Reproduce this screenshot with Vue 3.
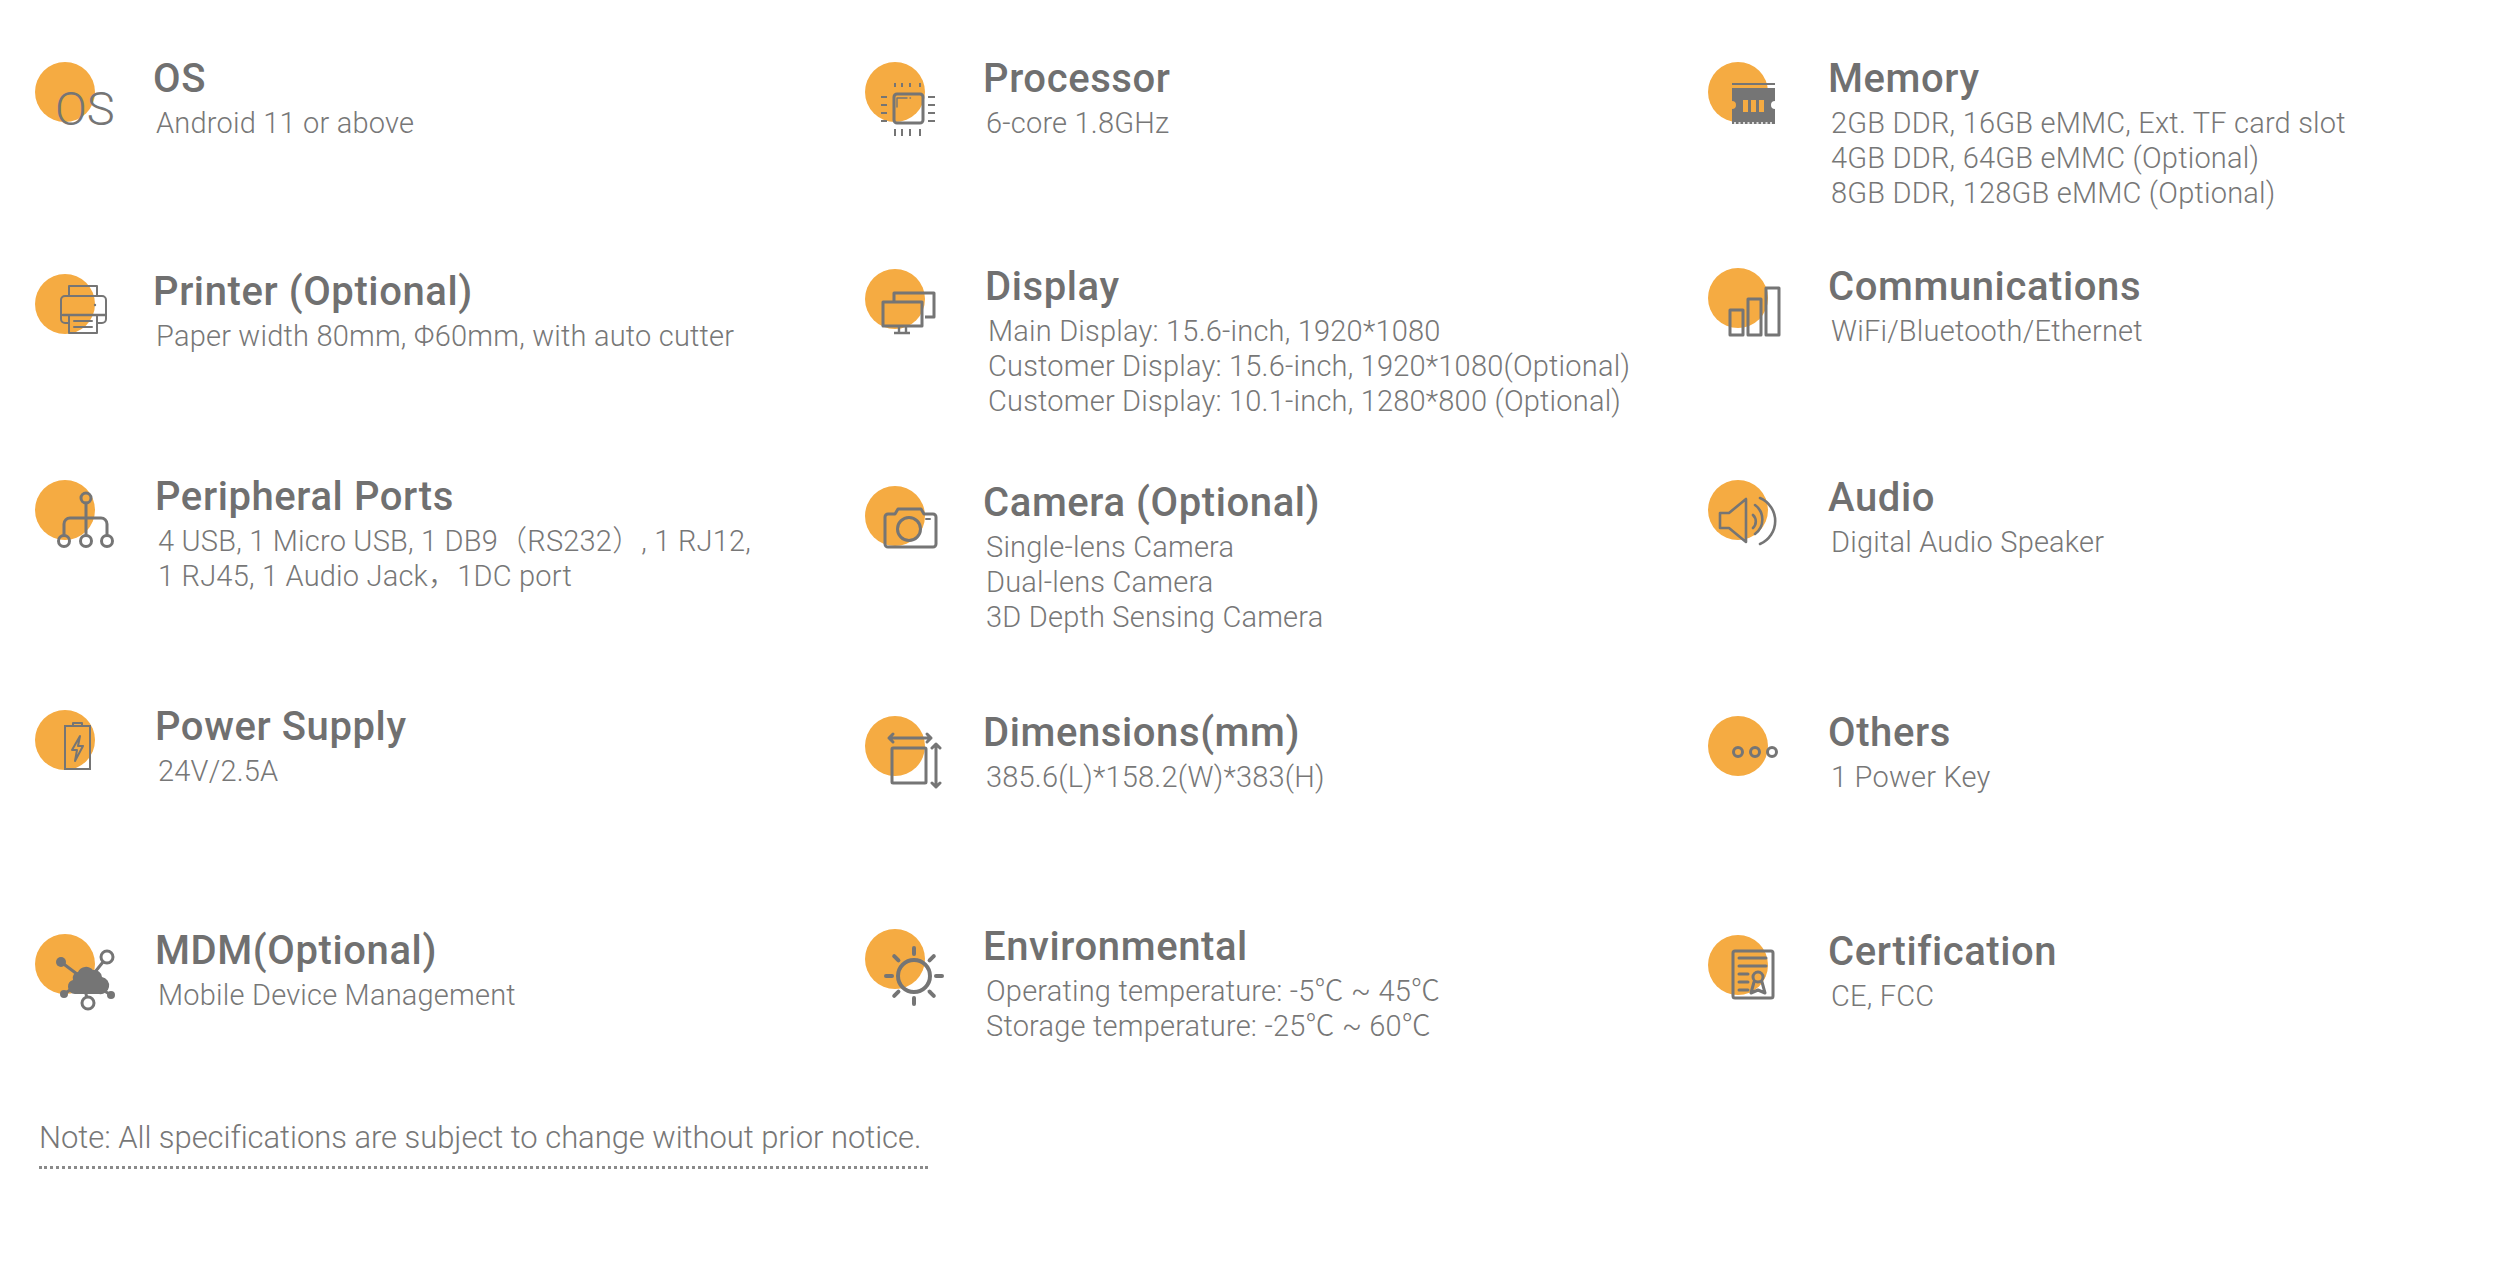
<script setup>
const specs = [
  { icon: 'os', nudge: 0, shift: 0, drop: 0, title: 'OS', lines: ['Android 11 or above'] },
  { icon: 'cpu', nudge: 0, shift: 0, drop: 0, title: 'Processor', lines: ['6-core 1.8GHz'] },
  { icon: 'memory', nudge: 0, shift: 2, drop: 0, title: 'Memory', lines: ['2GB DDR, 16GB eMMC, Ext. TF card slot', '4GB DDR, 64GB eMMC (Optional)', '8GB DDR, 128GB eMMC (Optional)'] },
  { icon: 'printer', nudge: 6, shift: 0, drop: 1, title: 'Printer (Optional)', lines: ['Paper width 80mm, Φ60mm, with auto cutter'] },
  { icon: 'display', nudge: 1, shift: 2, drop: 1, title: 'Display', lines: ['Main Display: 15.6-inch, 1920*1080', 'Customer Display: 15.6-inch, 1920*1080(Optional)', 'Customer Display: 10.1-inch, 1280*800 (Optional)'] },
  { icon: 'signal', nudge: 0, shift: 2, drop: 2, title: 'Communications', lines: ['WiFi/Bluetooth/Ethernet'] },
  { icon: 'ports', nudge: 0, shift: 2, drop: 0, title: 'Peripheral Ports', lines: ['4 USB, 1 Micro USB, 1 DB9（RS232）, 1 RJ12,', '1 RJ45, 1 Audio Jack，1DC port'] },
  { icon: 'camera', nudge: 6, shift: 0, drop: 0, title: 'Camera (Optional)', lines: ['Single-lens Camera', 'Dual-lens Camera', '3D Depth Sensing Camera'] },
  { icon: 'audio', nudge: 0, shift: 2, drop: 1, title: 'Audio', lines: ['Digital Audio Speaker'] },
  { icon: 'battery', nudge: 0, shift: 2, drop: 0, title: 'Power Supply', lines: ['24V/2.5A'] },
  { icon: 'size', nudge: 6, shift: 0, drop: 0, title: 'Dimensions(mm)', lines: ['385.6(L)*158.2(W)*383(H)'] },
  { icon: 'dots', nudge: 6, shift: 2, drop: 0, title: 'Others', lines: ['1 Power Key'] },
  { icon: 'mdm', nudge: 5, shift: 2, drop: 0, title: 'MDM(Optional)', lines: ['Mobile Device Management'] },
  { icon: 'sun', nudge: 0, shift: 0, drop: 1, title: 'Environmental', lines: ['Operating temperature: -5℃ ~ 45℃', 'Storage temperature: -25℃ ~ 60℃'] },
  { icon: 'cert', nudge: 6, shift: 2, drop: 0, title: 'Certification', lines: ['CE, FCC'] },
]
const rays = [0, 45, 90, 135, 180, 225, 270, 315]
</script>

<template>
  <div class="page">
    <div class="grid">
      <div v-for="s in specs" :key="s.title" class="spec" :class="'nudge-' + s.nudge">
        <svg class="icon" viewBox="0 0 100 90" fill="none" stroke="#757575" stroke-width="3" stroke-linecap="round" stroke-linejoin="round">
          <circle cx="30" cy="30" r="30" fill="#f5ab42" stroke="none" />
          <template v-if="s.icon === 'os'">
            <text x="20" y="63" class="os-glyph">OS</text>
          </template>
          <template v-else-if="s.icon === 'cpu'">
            <rect x="29" y="32" width="29" height="29" rx="3" />
            <path d="M32 45V36H42M45 36h.5" stroke-width="1.4" />
            <path d="M30 21v4M37 21v4M45 21v4M55 21v4M30 67v7M37 67v7M45 67v7M55 67v7M16 35h6M16 43h6M16 51h6M16 59h6M63 35h7M63 43h7M63 51h7M63 59h7" stroke-width="2" stroke-linecap="butt" />
          </template>
          <template v-else-if="s.icon === 'memory'">
            <path d="M24 22h43" stroke-width="2" stroke-linecap="butt" />
            <path d="M24 26h43v13a4 4 0 0 0 0 8v15H24V47a4 4 0 0 0 0-8z" fill="#757575" stroke="none" />
            <path d="M35 38h5v12h-5zM43 38h5v12h-5zM51 38h5v12h-5z" fill="#f5ab42" stroke="none" />
            <path d="M26 61h39" stroke="#fff" stroke-width="1.5" stroke-dasharray="2 2.5" stroke-linecap="butt" />
          </template>
          <template v-else-if="s.icon === 'printer'">
            <path d="M34 22V12h28v10" stroke-width="2" stroke-linecap="butt" />
            <path d="M34 49H30a4 4 0 0 1-4-4V26a4 4 0 0 1 4-4h37a4 4 0 0 1 4 4v19a4 4 0 0 1-4 4h-5" stroke-width="2" />
            <path d="M28 41h42" stroke-width="2.5" />
            <path d="M34 41v18h28V41" stroke-width="2" stroke-linecap="butt" />
            <path d="M39 47h18M39 53h18" stroke-width="2" />
            <circle cx="60" cy="31" r="1.2" fill="#757575" stroke="none" />
          </template>
          <template v-else-if="s.icon === 'display'">
            <path d="M29 33v-9h40v24h-9" stroke-linecap="butt" />
            <rect x="18" y="33" width="39" height="24" />
            <path d="M34 57v6M41 57v6M29 64h16" stroke-width="2.4" stroke-linecap="butt" />
          </template>
          <template v-else-if="s.icon === 'signal'">
            <rect x="22" y="42" width="13" height="25" />
            <rect x="40" y="31" width="13" height="36" />
            <rect x="58" y="20" width="13" height="47" />
          </template>
          <template v-else-if="s.icon === 'ports'">
            <circle cx="51" cy="18" r="5" />
            <circle cx="29" cy="61" r="5.5" />
            <circle cx="51" cy="61" r="5.5" />
            <circle cx="72" cy="61" r="5.5" />
            <path d="M51 23v32M29 55V44a6 6 0 0 1 6-6h31a6 6 0 0 1 6 6v11" />
          </template>
          <template v-else-if="s.icon === 'battery'">
            <rect x="30" y="16" width="25" height="43" stroke-width="2" stroke-linejoin="miter" />
            <path d="M38 16v-3h9v3" stroke-width="2" />
            <path d="M45 26l-8 14h5l-2 11 8-15h-5z" stroke-width="2" />
          </template>
          <template v-else-if="s.icon === 'camera'">
            <path d="M23 28h7l3-5h23l3 5h9a3 3 0 0 1 3 3v27a3 3 0 0 1-3 3H23a3 3 0 0 1-3-3V31a3 3 0 0 1 3-3z" />
            <circle cx="44" cy="43" r="11.5" />
            <path d="M61 33h4" stroke-width="2" />
          </template>
          <template v-else-if="s.icon === 'size'">
            <path d="M24 22h42M28 18l-4 4 4 4M62 18l4 4-4 4" />
            <rect x="27" y="32" width="34" height="35" rx="1" />
            <path d="M71 28v43M67 32l4-4 4 4M67 67l4 4 4-4" />
          </template>
          <template v-else-if="s.icon === 'audio'">
            <path d="M12 33h9l17-14v43L21 48h-9z" stroke-width="2.6" />
            <path d="M45 35a9 9 0 0 1 0 13M47 25a18 18 0 0 1 0 29M52 18a25 25 0 0 1 0 46" stroke-width="2.6" />
          </template>
          <template v-else-if="s.icon === 'dots'">
            <circle cx="30" cy="36" r="4.5" />
            <circle cx="47" cy="36" r="4.5" />
            <circle cx="64" cy="36" r="4.5" />
          </template>
          <template v-else-if="s.icon === 'mdm'">
            <path d="M26 28l16 12M72 23L60 38M29 60l12-8M53 69l-4-18M76 61L58 50" />
            <path d="M40 60a7 7 0 0 1-7-7 7 7 0 0 1 5-7 6 6 0 0 1 5-8 9 9 0 0 1 15-2 8 8 0 0 1 9 7 8.5 8.5 0 0 1-3 17z" fill="#757575" stroke="none" />
            <circle cx="26" cy="28" r="5" fill="#757575" stroke="none" />
            <circle cx="29" cy="60" r="4" fill="#757575" stroke="none" />
            <circle cx="76" cy="61" r="4" fill="#757575" stroke="none" />
            <circle cx="72" cy="23" r="6" fill="#fff" />
            <circle cx="53" cy="69" r="6" fill="#fff" />
          </template>
          <template v-else-if="s.icon === 'sun'">
            <circle cx="49" cy="47" r="16" stroke-width="4" />
            <path v-for="a in rays" :key="a" d="M49 25v-6" stroke-width="4" :transform="'rotate(' + a + ' 49 47)'" />
          </template>
          <template v-else-if="s.icon === 'cert'">
            <rect x="25" y="16" width="40" height="47" rx="2" />
            <path d="M31 23h27M31 31h27M31 39h9M31 47h9M31 55h9" />
            <circle cx="50" cy="42" r="5" />
            <path d="M46 47l-3 11 7-3 7 3-3-11" />
          </template>
        </svg>
        <div class="copy" :class="['shift-' + s.shift, 'drop-' + s.drop]">
          <h3 class="title">{{ s.title }}</h3>
          <p v-for="line in s.lines" :key="line" class="line">{{ line }}</p>
        </div>
      </div>
    </div>
    <p class="note">Note: All specifications are subject to change without prior notice.</p>
  </div>
</template>

<style>
html, body { background: #fff; }
</style>

<style scoped>
.page {
  box-sizing: border-box;
  width: 2520px;
  height: 1262px;
  padding: 62px 0 0 35px;
  background: #fff;
  color: #757575;
  font-family: Roboto, "Noto Sans CJK SC", sans-serif;
  overflow: hidden;
}
.grid {
  display: grid;
  grid-template-columns: 830px 843px 1fr;
  grid-template-rows: 206px 212px 230px 219px 171px;
}
.spec { display: flex; align-items: flex-start; box-sizing: border-box; }
.nudge-1 { padding-top: 1px; }
.nudge-5 { padding-top: 5px; }
.nudge-6 { padding-top: 6px; }
.icon { width: 100px; height: 90px; flex: none; margin-right: 18px; }
.os-glyph { font-family: Roboto, sans-serif; font-size: 47px; font-weight: 300; fill: #757575; stroke: none; }
.copy { margin-top: -5px; }
.drop-1 { margin-top: -4px; }
.drop-2 { margin-top: -3px; }
.shift-2 { margin-left: 2px; }
.title {
  margin: 0 0 5px;
  font-size: 40px;
  line-height: 44px;
  font-weight: 500;
  letter-spacing: 0.6px;
  color: #707070;
}
.line {
  margin: 0 0 0 3px;
  font-size: 29px;
  line-height: 35px;
  font-weight: 300;
  letter-spacing: 0.2px;
  color: #777;
  white-space: nowrap;
}
.note {
  display: block;
  box-sizing: border-box;
  width: 889px;
  margin: 18px 0 0 4px;
  padding-bottom: 8px;
  border-bottom: 3px dotted #8a8a8a;
  font-size: 31px;
  line-height: 40px;
  font-weight: 300;
  letter-spacing: -0.05px;
  color: #777;
  white-space: nowrap;
}
</style>
